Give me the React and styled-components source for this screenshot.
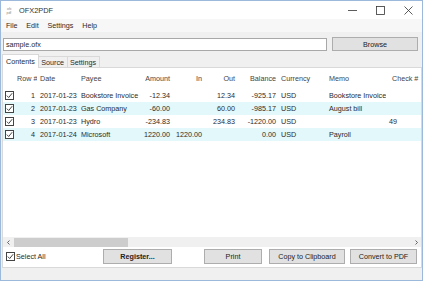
import styled, { createGlobalStyle } from "styled-components";

const GlobalStyle = createGlobalStyle`
  html, body {
    margin: 0;
    padding: 0;
    background: #fff;
  }
  body {
    font-family: "Liberation Sans", Arial, sans-serif;
    font-size: 7.2px;
    color: #2a2a2a;
  }
  * { box-sizing: border-box; }
`;

const Window = styled.div`
  width: 423px;
  height: 281px;
  border: 1px solid #9cb8da;
  background: #f0f0f0;
  display: flex;
  flex-direction: column;
`;

const TitleBar = styled.div`
  height: 18px;
  background: #fff;
  display: flex;
  align-items: center;
  padding-left: 5px;
`;

const Title = styled.span`
  margin-left: 4px;
  font-size: 7.4px;
  color: #333;
  flex: 1;
`;

const Controls = styled.div`
  display: flex;
  height: 100%;
`;

const ControlBtn = styled.div`
  width: 28px;
  height: 100%;
  display: flex;
  align-items: center;
  justify-content: center;
`;

const MenuBar = styled.div`
  height: 13px;
  background: #f7f7f7;
  display: flex;
  align-items: center;
  padding-left: 0.5px;
`;

const MenuItem = styled.span`
  padding: 0 4.4px;
  color: #2a2a2a;
`;

const PathRow = styled.div`
  display: flex;
  align-items: center;
  height: 14px;
  margin-top: 5px;
  padding: 0 4px 0 2px;
  gap: 5px;
`;

const PathInput = styled.div`
  flex: 1;
  height: 13px;
  background: #fff;
  border: 1px solid #a8a8a8;
  display: flex;
  align-items: center;
  padding-left: 2px;
`;

const Button = styled.div`
  width: ${(p) => p.$w}px;
  margin-left: ${(p) => p.$ml || 0}px;
  height: ${(p) => p.$h || 15}px;
  background: #e1e1e1;
  border: 1px solid #adadad;
  display: flex;
  align-items: center;
  justify-content: center;
  font-weight: ${(p) => (p.$bold ? "bold" : "normal")};
  color: #222;
`;

const TabRow = styled.div`
  display: flex;
  align-items: flex-end;
  height: 14px;
  margin-top: 3px;
  padding-left: 1px;
  position: relative;
  z-index: 1;
`;

const Tab = styled.div`
  height: ${(p) => (p.$active ? 14 : 12)}px;
  padding: 0 ${(p) => (p.$active ? 3 : 2.5)}px;
  background: ${(p) => (p.$active ? "#fff" : "#f0f0f0")};
  border: 1px solid #d9d9d9;
  border-bottom: ${(p) => (p.$active ? "none" : "1px solid #d9d9d9")};
  margin-left: ${(p) => (p.$active ? 0 : -1)}px;
  display: flex;
  align-items: center;
`;

const Pane = styled.div`
  height: 201px;
  margin: -1px 0 0 1px;
  background: #fff;
  border: 1px solid #d9d9d9;
  display: flex;
  flex-direction: column;
`;

const Grid = styled.div`
  height: 179px;
  display: flex;
  flex-direction: column;
`;

const cols = "14px 20px 41px 62px 32px 32px 33px 41px 48px 60px 35px";

const Row = styled.div`
  display: grid;
  grid-template-columns: ${cols};
  height: ${(p) => p.$h}px;
  align-items: center;
  background: ${(p) => (p.$alt ? "#e2f8fb" : "#fff")};
`;

const Cell = styled.div`
  white-space: nowrap;
  overflow: hidden;
  text-align: ${(p) => (p.$right ? "right" : "left")};
  padding: ${(p) => (p.$right ? "0 2px 0 0" : `0 0 0 ${p.$pl || 3}px`)};
  color: ${(p) => (p.$head ? "#444" : "#2a2a2a")};
`;

const CheckCell = styled.div`
  display: flex;
  align-items: center;
  padding-left: 2px;
`;

const Box = styled.div`
  width: 9px;
  height: 9px;
  border: 1px solid #444;
  background: #fff;
  display: flex;
  align-items: center;
  justify-content: center;
`;

const Filler = styled.div`
  flex: 1;
`;

const HScroll = styled.div`
  height: 10px;
  background: #f0f0f0;
  display: flex;
  align-items: center;
`;

const Arrow = styled.div`
  width: 10px;
  height: 10px;
  display: flex;
  align-items: center;
  justify-content: center;
`;

const Thumb = styled.div`
  width: 114px;
  height: 9px;
  margin-left: 1px;
  background: #cdcdcd;
`;

const Bottom = styled.div`
  display: flex;
  align-items: center;
  height: 15px;
  margin-top: 2px;
  padding-left: 3px;
`;

const SelectAll = styled.div`
  width: 97px;
  display: flex;
  align-items: center;
  gap: 1px;
`;

const Status = styled.div`
  flex: 1;
  background: #f0f0f0;
`;

const Check = () => (
  <Box>
    <svg width="7" height="7" viewBox="0 0 7 7">
      <path d="M0.8 3.6 L2.7 5.5 L6.2 1.2" fill="none" stroke="#333" strokeWidth="0.9" />
    </svg>
  </Box>
);

const AppIcon = () => (
  <svg width="9" height="9" viewBox="0 0 9 9">
    <text x="1" y="3.6" fontSize="3.4" fill="#888" fontFamily="Liberation Sans">ofx</text>
    <text x="0.5" y="8" fontSize="3.4" fill="#888" fontFamily="Liberation Sans">pdf</text>
  </svg>
);

const headers = [
  ["Row #", true],
  ["Date", false],
  ["Payee", false],
  ["Amount", true],
  ["In", true],
  ["Out", true],
  ["Balance", true],
  ["Currency", false],
  ["Memo", false],
  ["Check #", false, 6],
];

const rows = [
  ["1", "2017-01-23", "Bookstore Invoice", "-12.34", "", "12.34", "-925.17", "USD", "Bookstore Invoice", ""],
  ["2", "2017-01-23", "Gas Company", "-60.00", "", "60.00", "-985.17", "USD", "August bill", ""],
  ["3", "2017-01-23", "Hydro", "-234.83", "", "234.83", "-1220.00", "USD", "", "49"],
  ["4", "2017-01-24", "Microsoft", "1220.00", "1220.00", "", "0.00", "USD", "Payroll", ""],
];

export default function App() {
  return (
    <>
      <GlobalStyle />
      <Window>
        <TitleBar>
          <AppIcon />
          <Title>OFX2PDF</Title>
          <Controls>
            <ControlBtn>
              <svg width="9" height="9" viewBox="0 0 9 9">
                <path d="M0 4.5 H9" stroke="#333" strokeWidth="0.8" />
              </svg>
            </ControlBtn>
            <ControlBtn>
              <svg width="9" height="9" viewBox="0 0 9 9">
                <rect x="0.5" y="0.5" width="8" height="8" fill="none" stroke="#333" strokeWidth="0.8" />
              </svg>
            </ControlBtn>
            <ControlBtn>
              <svg width="9" height="9" viewBox="0 0 9 9">
                <path d="M0.5 0.5 L8.5 8.5 M8.5 0.5 L0.5 8.5" stroke="#333" strokeWidth="0.8" />
              </svg>
            </ControlBtn>
          </Controls>
        </TitleBar>
        <MenuBar>
          <MenuItem>File</MenuItem>
          <MenuItem>Edit</MenuItem>
          <MenuItem>Settings</MenuItem>
          <MenuItem>Help</MenuItem>
        </MenuBar>
        <PathRow>
          <PathInput>sample.ofx</PathInput>
          <Button $w={86} $h={14}>Browse</Button>
        </PathRow>
        <TabRow>
          <Tab $active>Contents</Tab>
          <Tab>Source</Tab>
          <Tab>Settings</Tab>
        </TabRow>
        <Pane>
          <Grid>
            <Row $h={21}>
              <div />
              {headers.map(([h, right, pl]) => (
                <Cell key={h} $right={right} $pl={pl} $head>
                  {h}
                </Cell>
              ))}
            </Row>
            {rows.map((r, i) => (
              <Row key={r[0]} $h={13} $alt={i % 2 === 1}>
                <CheckCell>
                  <Check />
                </CheckCell>
                {r.map((v, j) => (
                  <Cell key={j} $right={headers[j][1]}>
                    {v}
                  </Cell>
                ))}
              </Row>
            ))}
            <Filler />
            <HScroll>
              <Arrow>
                <svg width="5" height="5" viewBox="0 0 5 5">
                  <path d="M3.5 0.5 L1.5 2.5 L3.5 4.5" fill="none" stroke="#555" strokeWidth="0.9" />
                </svg>
              </Arrow>
              <Thumb />
              <Filler />
              <Arrow>
                <svg width="5" height="5" viewBox="0 0 5 5">
                  <path d="M1.5 0.5 L3.5 2.5 L1.5 4.5" fill="none" stroke="#555" strokeWidth="0.9" />
                </svg>
              </Arrow>
            </HScroll>
          </Grid>
          <Bottom>
            <SelectAll>
              <Check />
              <span>Select All</span>
            </SelectAll>
            <Button $w={69} $bold>Register...</Button>
            <Button $w={58} $ml={32}>Print</Button>
            <Button $w={76} $ml={7}>Copy to Clipboard</Button>
            <Button $w={67} $ml={5}>Convert to PDF</Button>
          </Bottom>
        </Pane>
        <Status />
      </Window>
    </>
  );
}
